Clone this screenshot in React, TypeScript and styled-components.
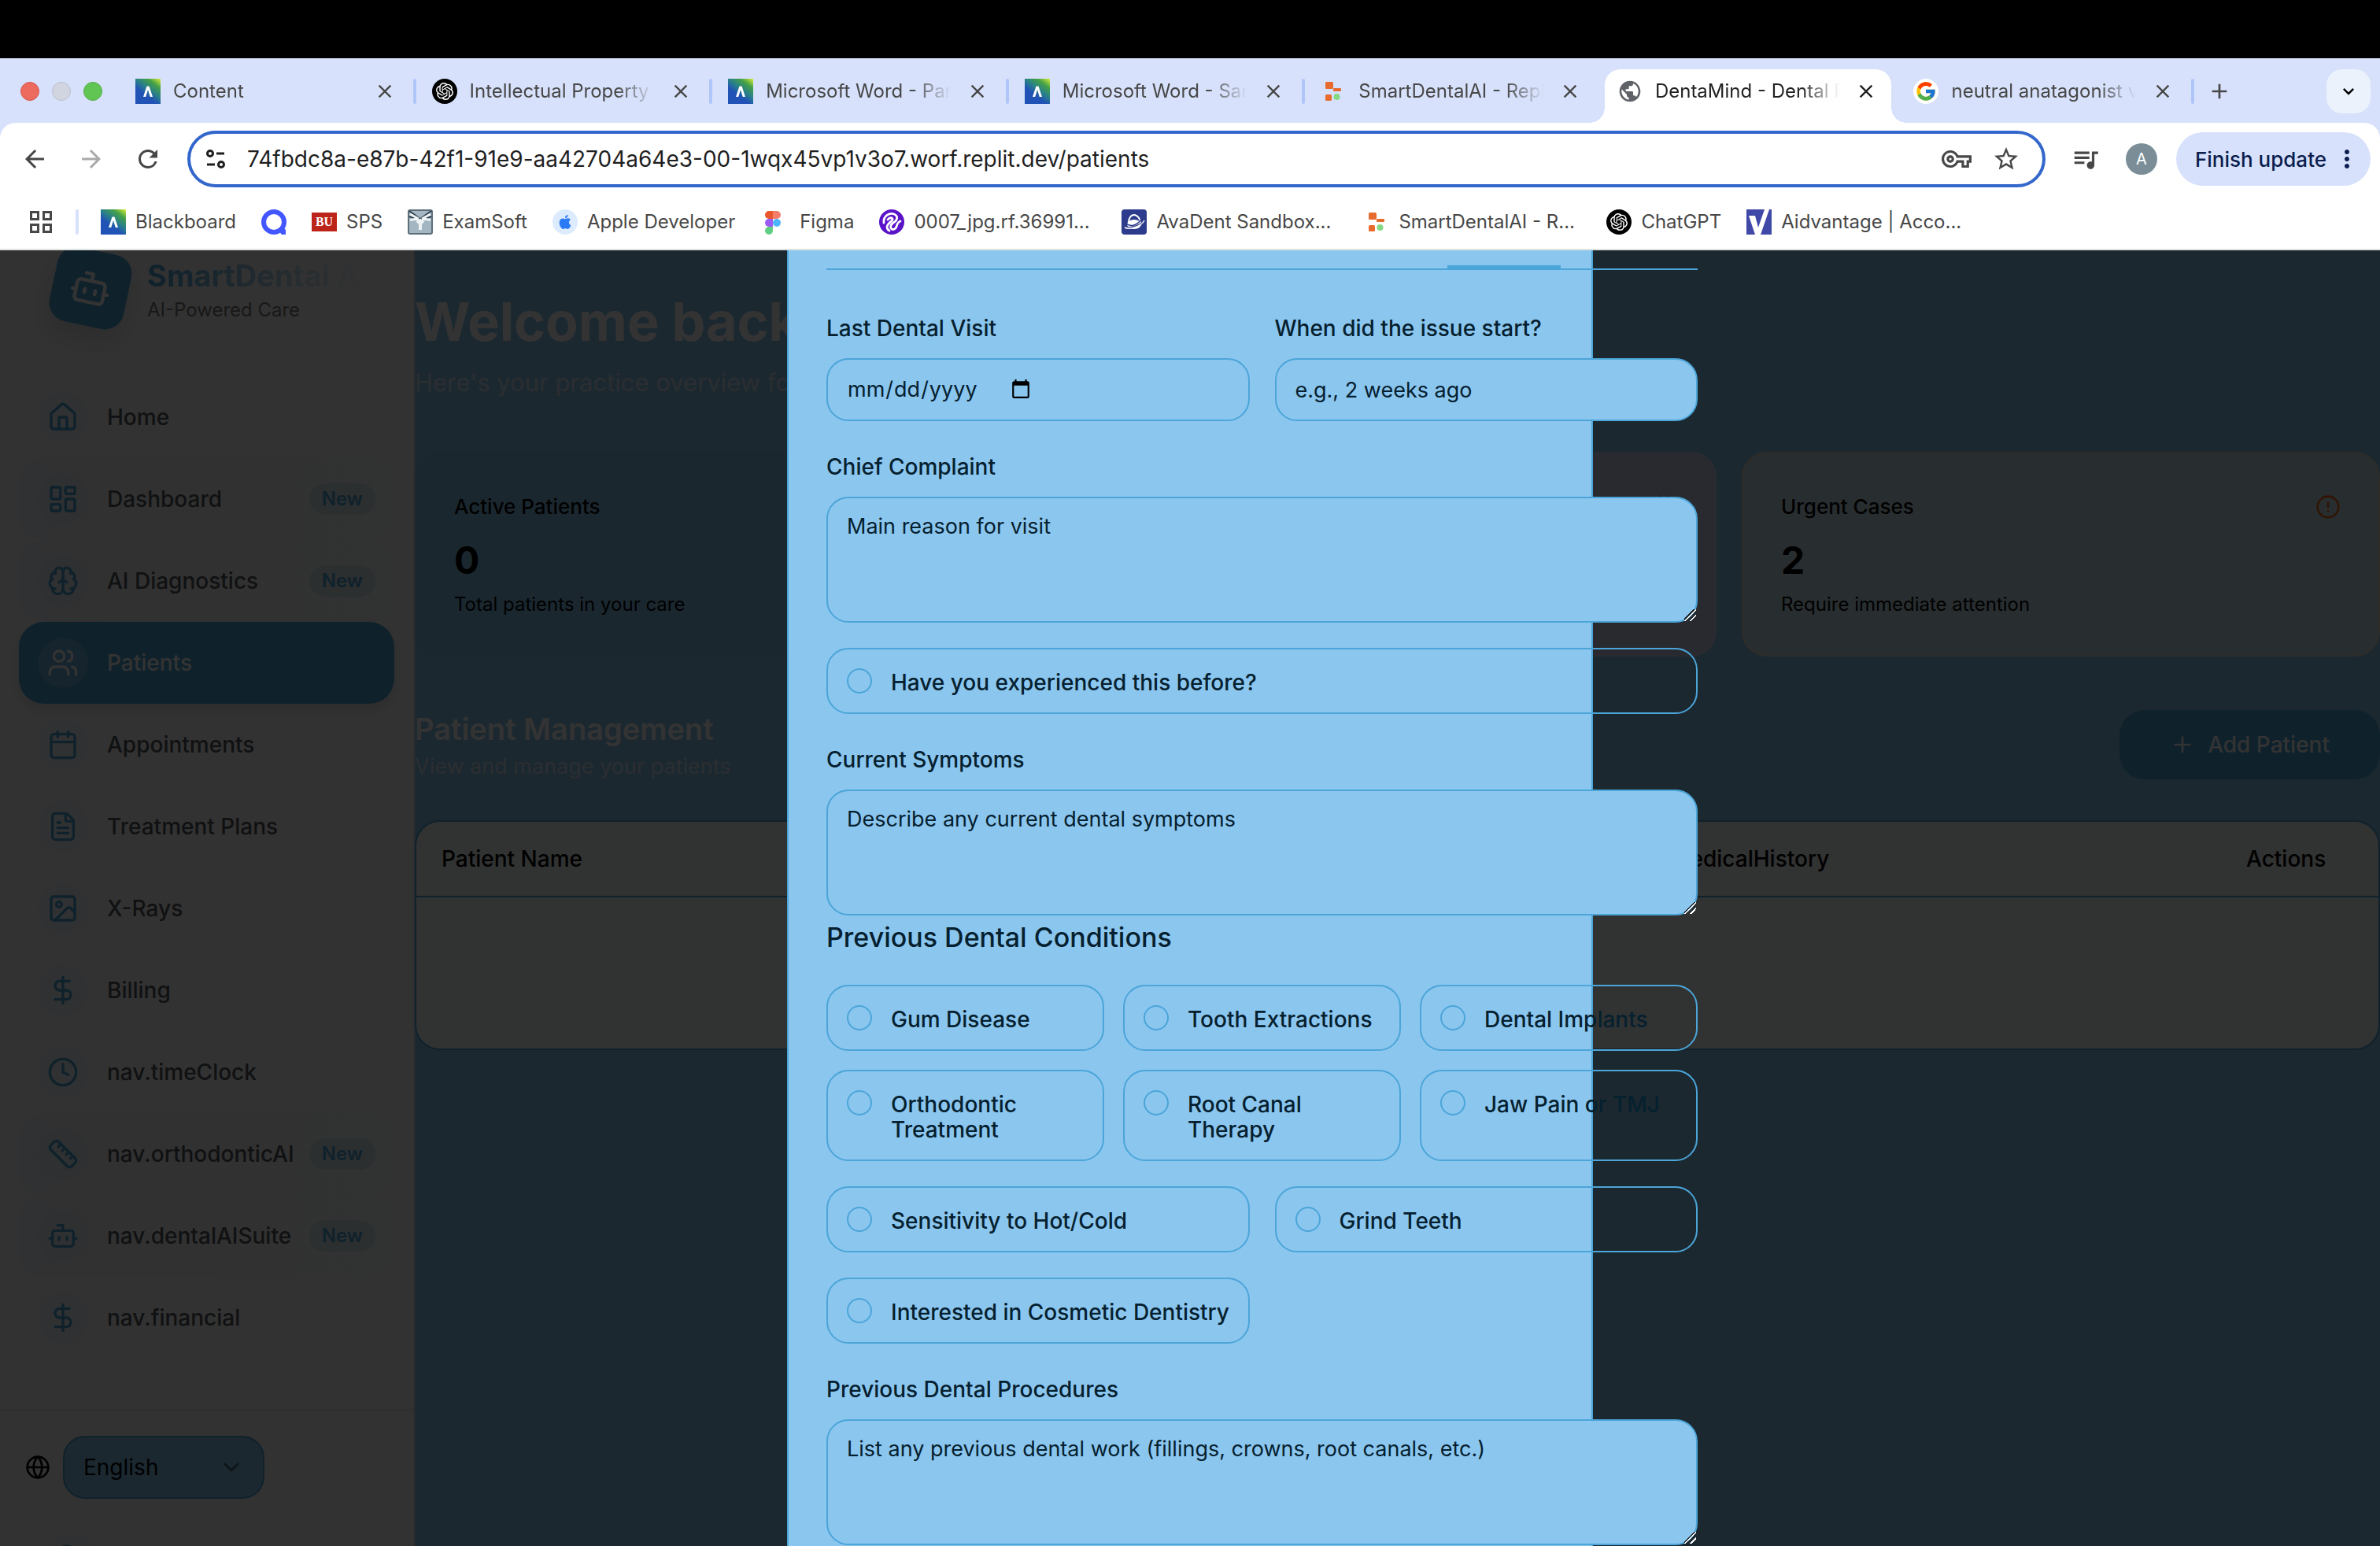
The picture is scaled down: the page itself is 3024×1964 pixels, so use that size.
import React from 'react';
import styled, { createGlobalStyle, css } from 'styled-components';
import {
  Bot, Brain, Calendar, ChevronDown, CircleAlert, Clock, DollarSign, FileText, Globe,
  House, Image as ImageIcon, LayoutDashboard, LogOut, Plus, Ruler, Users,
} from 'lucide-react';
import {
  MdArrowBack, MdArrowForward, MdClose, MdKeyboardArrowDown, MdOutlineVpnKey, MdPublic,
  MdQueueMusic, MdRefresh, MdStarBorder, MdMoreVert, MdAdd,
} from 'react-icons/md';
import { FcGoogle } from 'react-icons/fc';
import { SiOpenai, SiApple } from 'react-icons/si';

const color = {
  strip: '#d7e1fb',
  chromeText: '#474747',
  ink: '#1f1f1f',
  sky: '#8bc6ef',
  primary: '#4ba5d8',
  deep: '#05202e',
};

const GlobalStyle = createGlobalStyle`
  *, *::before, *::after { box-sizing: border-box; }
  html, body { margin: 0; height: 100%; }
  body { background: #000; overflow: hidden; font-family: Inter, 'Liberation Sans', sans-serif; }
  #root { height: 100%; }
  button, input, textarea, select { font: inherit; color: inherit; margin: 0; }
  h1, h2, h3, p { margin: 0; }
  a { color: inherit; text-decoration: none; }
`;

/* ---------- Browser frame ---------- */

const Screen = styled.div`
  display: flex;
  flex-direction: column;
  height: 100vh;
  padding-top: 74px;
`;

const TabStrip = styled.header`
  display: flex;
  align-items: flex-start;
  flex: none;
  height: 82px;
  padding: 14px 12px 0 26px;
  background: ${color.strip};
`;

const WindowButtons = styled.div`
  display: flex;
  align-items: center;
  gap: 16px;
  flex: none;
  width: 126px;
  height: 56px;
`;

const WindowButton = styled.button<{ $fill: string; $edge: string }>`
  width: 24px;
  height: 24px;
  padding: 0;
  border: 1px solid ${p => p.$edge};
  border-radius: 50%;
  background: ${p => p.$fill};
`;

const Tabs = styled.div`
  display: flex;
  flex: 0 1 2636px;
  min-width: 0;
`;

const TabCell = styled.div`
  display: flex;
  flex: 1;
  min-width: 0;
`;

const TabBody = styled.div<{ $active?: boolean }>`
  position: relative;
  display: flex;
  align-items: center;
  gap: 16px;
  flex: 1;
  min-width: 0;
  height: 68px;
  margin: 0 4px;
  padding: 0 18px 12px 16px;
  border-radius: 20px 20px 0 0;
  color: ${p => (p.$active ? color.ink : color.chromeText)};
  ${p => p.$active && css`
    background: #fff;
    &::before, &::after {
      content: '';
      position: absolute;
      bottom: 0;
      width: 20px;
      height: 20px;
    }
    &::before { right: 100%; background: radial-gradient(circle at 0 0, transparent 20px, #fff 20px); }
    &::after { left: 100%; background: radial-gradient(circle at 100% 0, transparent 20px, #fff 20px); }
  `}
`;

const TabTitle = styled.span`
  flex: 1;
  overflow: hidden;
  margin-right: 4px;
  font-size: 24px;
  line-height: 32px;
  white-space: nowrap;
  mask-image: linear-gradient(to right, #000 calc(100% - 48px), transparent);
`;

const TabDivider = styled.span<{ $hidden?: boolean }>`
  flex: none;
  width: 4px;
  height: 32px;
  margin-top: 12px;
  border-radius: 2px;
  background: ${p => (p.$hidden ? 'transparent' : '#aec6f8')};
`;

const PlainButton = styled.button`
  display: flex;
  flex: none;
  padding: 0;
  border: 0;
  background: none;
`;

const NewTab = styled(PlainButton)`
  align-items: center;
  height: 56px;
  margin: 0 auto 0 16px;
  color: ${color.chromeText};
`;

const TabSearch = styled(PlainButton)`
  align-items: center;
  justify-content: center;
  width: 56px;
  height: 56px;
  border-radius: 20px;
  background: #ebf2fc;
`;

const ToolbarBack = styled.div`
  flex: none;
  background: ${color.strip};
`;

const Toolbar = styled.div`
  display: flex;
  align-items: center;
  height: 92px;
  padding: 0 12px 0 26px;
  border-radius: 20px 20px 0 0;
  background: #fff;
  color: ${color.chromeText};
`;

const NavButtons = styled.div`
  display: flex;
  gap: 36px;
  margin-right: 32px;
`;

const NavButton = styled(PlainButton)`
  color: ${color.chromeText};
  &:disabled { color: #aaa; }
`;

const AddressBar = styled.label`
  display: flex;
  align-items: center;
  gap: 26px;
  flex: 1;
  height: 72px;
  padding: 0 28px 0 18px;
  border: 4px solid #3367cc;
  border-radius: 36px;
`;

const AddressInput = styled.input`
  flex: 1;
  min-width: 0;
  padding: 0;
  border: 0;
  outline: 0;
  background: none;
  color: ${color.ink};
  font-size: 28px;
  line-height: 40px;
`;

const ToolbarEnd = styled.div`
  display: flex;
  align-items: center;
  gap: 24px;
  margin-left: 32px;
`;

const Avatar = styled.button`
  width: 40px;
  height: 40px;
  margin-left: 8px;
  padding: 0;
  border: 0;
  border-radius: 50%;
  background: #7b8e98;
  color: #fff;
  font-size: 20px;
`;

const UpdateButton = styled.button`
  display: flex;
  align-items: center;
  gap: 8px;
  height: 68px;
  padding: 0 12px 0 24px;
  border: 0;
  border-radius: 34px;
  background: ${color.strip};
  color: #0a1d4d;
  font-size: 26px;
  font-weight: 500;
`;

const Bookmarks = styled.nav`
  display: flex;
  align-items: center;
  flex: none;
  height: 70px;
  padding: 0 38px;
  border-bottom: 2px solid #dfe3e0;
  background: #fff;
  color: ${color.chromeText};
`;

const BookmarkDivider = styled.span`
  width: 4px;
  height: 32px;
  margin: 0 28px 0 30px;
  border-radius: 2px;
  background: ${color.strip};
`;

const Bookmark = styled.a`
  display: flex;
  align-items: center;
  gap: 12px;
  margin-right: 32px;
  font-size: 24px;
  line-height: 32px;
  white-space: nowrap;
`;

const BookmarkLabel = styled.span<{ $long: boolean }>`
  min-width: ${p => (p.$long ? '232px' : '0')};
`;

const RoundIcon = styled.span<{ $bg: string; $fg: string }>`
  display: flex;
  align-items: center;
  justify-content: center;
  flex: none;
  width: 32px;
  height: 32px;
  border-radius: 50%;
  background: ${p => p.$bg};
  color: ${p => p.$fg};
`;

const BuBadge = styled.span`
  width: 32px;
  height: 24px;
  background: #bc2419;
  color: #fff;
  font: bold 16px/24px 'Liberation Serif', serif;
  text-align: center;
`;

/* ---------- Page behind the dialog ---------- */

const Page = styled.div`
  position: relative;
  display: flex;
  flex: 1;
  min-height: 0;
  overflow: hidden;
  background: ${color.sky};
`;

const Sidebar = styled.aside`
  display: flex;
  flex-direction: column;
  flex: none;
  width: 527px;
  border-right: 2px solid #e4e6e8;
  background: #fafafa;
`;

const Brand = styled.div`
  display: flex;
  gap: 24px;
  height: 96px;
  margin-bottom: 64px;
  padding-left: 67px;
`;

const BrandMark = styled.div`
  display: flex;
  align-items: center;
  justify-content: center;
  flex: none;
  width: 96px;
  height: 96px;
  border-radius: 24px;
  background: ${color.primary};
  color: #fff;
  transform: rotate(12deg);
  box-shadow: 0 16px 32px rgba(0, 0, 0, 0.12);
`;

const BrandText = styled.div`
  padding-top: 8px;
`;

const BrandName = styled.div`
  font-size: 38px;
  font-weight: 700;
  line-height: 48px;
  background: linear-gradient(to right, ${color.primary}, #fafafa);
  background-clip: text;
  color: transparent;
  white-space: nowrap;
`;

const BrandTag = styled.p`
  color: #777;
  font-size: 24px;
  line-height: 40px;
`;

const Nav = styled.nav`
  padding: 0 24px;
`;

const NavItem = styled.a<{ $active?: boolean; $isNew?: boolean }>`
  display: flex;
  align-items: center;
  height: 104px;
  padding: 0 24px;
  border-radius: 32px;
  color: ${p => (p.$active ? '#fff' : '#50555c')};
  font-size: 28px;
  font-weight: 500;
  ${p => p.$isNew && css`background: linear-gradient(to right, #f1f4fa, #f4f6f2 50%, #f5f7fb);`}
  ${p => p.$active && css`
    background: ${color.primary};
    box-shadow: 0 8px 16px rgba(0, 0, 0, 0.12);
  `}
`;

const NavIcon = styled.span<{ $active?: boolean; $isNew?: boolean }>`
  display: flex;
  align-items: center;
  justify-content: center;
  flex: none;
  width: 64px;
  height: 64px;
  margin-right: 24px;
  border-radius: 50%;
  background: ${p => (p.$active ? '#6ab3de' : p.$isNew ? '#e4eff2' : '#f0f3f7')};
  color: ${p => (p.$active ? '#fff' : color.primary)};
`;

const NewBadge = styled.span`
  margin-left: auto;
  padding: 0 16px;
  border-radius: 20px;
  background: #d9e9f0;
  color: ${color.primary};
  font-size: 24px;
  font-weight: 600;
  line-height: 40px;
`;

const SidebarFooter = styled.div`
  margin-top: 64px;
  padding: 32px 32px 0;
  border-top: 2px solid #e6e8ea;
`;

const LanguageRow = styled.label`
  display: flex;
  align-items: center;
  gap: 16px;
  color: #000;
`;

const SelectWrap = styled.span`
  position: relative;
  display: flex;
  width: 256px;
`;

const LanguageSelect = styled.select`
  appearance: none;
  width: 100%;
  height: 80px;
  padding: 0 24px;
  border: 2px solid ${color.primary};
  border-radius: 28px;
  background: ${color.sky};
  font-size: 28px;
`;

const SelectArrow = styled(ChevronDown)`
  position: absolute;
  top: 24px;
  right: 26px;
  opacity: 0.5;
  pointer-events: none;
`;

const SignOut = styled.button`
  display: flex;
  align-items: center;
  justify-content: center;
  width: 56px;
  height: 56px;
  margin: 44px 0 0 32px;
  padding: 0;
  border: 0;
  border-radius: 50%;
  background: #f0f3f7;
  color: ${color.primary};
`;

const Main = styled.main`
  flex: 1;
  min-width: 0;
  padding-top: 50px;
`;

const Welcome = styled.h1`
  color: #fff;
  font-size: 68px;
  font-weight: 700;
  line-height: 80px;
`;

const Lead = styled.p`
  margin: 14px 0 64px;
  color: #d4e6f3;
  font-size: 31px;
  line-height: 48px;
`;

const Cards = styled.div`
  display: grid;
  grid-template-columns: repeat(3, 1fr);
  gap: 32px;
`;

const Card = styled.section<{ $bg: string; $edge: string }>`
  padding: 48px;
  border: 2px solid ${p => p.$edge};
  border-radius: 32px;
  background: ${p => p.$bg};
  color: #000;
`;

const CardHead = styled.div`
  display: flex;
  align-items: center;
  justify-content: space-between;
  height: 40px;
  margin-bottom: 16px;
`;

const CardTitle = styled.h3`
  font-size: 26px;
  font-weight: 500;
  line-height: 40px;
`;

const CardValue = styled.p`
  font-size: 48px;
  font-weight: 700;
  line-height: 64px;
`;

const CardNote = styled.p`
  margin-top: 8px;
  font-size: 24px;
  line-height: 32px;
`;

const SectionHead = styled.div`
  display: flex;
  align-items: center;
  justify-content: space-between;
  margin: 64px 0 48px;
`;

const SectionTitle = styled.h2`
  color: #fff;
  font-size: 38px;
  font-weight: 600;
  line-height: 56px;
`;

const SectionNote = styled.p`
  color: #d4e6f3;
  font-size: 27px;
  line-height: 40px;
`;

const AddButton = styled.button`
  display: flex;
  align-items: center;
  gap: 16px;
  height: 88px;
  padding: 0 64px;
  border: 0;
  border-radius: 32px;
  background: ${color.primary};
  color: #fff;
  font-size: 28px;
  font-weight: 500;
`;

const TableFrame = styled.div`
  overflow: hidden;
  border: 2px solid ${color.primary};
  border-radius: 32px;
  background: #f6f7f9;
`;

const Table = styled.table`
  width: 100%;
  border-collapse: separate;
  border-spacing: 0;
  table-layout: fixed;
  color: #000;
  font-size: 28px;
`;

const HeadCell = styled.th<{ $width?: string }>`
  width: ${p => p.$width ?? 'auto'};
  height: 96px;
  padding: 0 32px;
  border-bottom: 2px solid ${color.primary};
  font-weight: 500;
  text-align: left;
`;

const EmptyCell = styled.td`
  height: 192px;
  text-align: center;
`;

/* ---------- Dialog ---------- */

const Overlay = styled.div`
  position: absolute;
  inset: 0;
  display: flex;
  justify-content: center;
  overflow: hidden;
  background: rgba(0, 0, 0, 0.8);
`;

const Dialog = styled.section`
  width: 1024px;
  padding: 0 48px;
  border: solid ${color.primary};
  border-width: 0 2px;
  background: ${color.sky};
  color: ${color.deep};
`;

const Form = styled.form`
  display: flex;
  flex-direction: column;
  gap: 32px;
  min-width: 1107px;
`;

const StepTabs = styled.div`
  display: flex;
  justify-content: flex-end;
  height: 25px;
  margin-bottom: 16px;
  padding-right: 174px;
  border-bottom: 2px solid ${color.primary};
`;

const StepMarker = styled.span`
  align-self: flex-end;
  width: 144px;
  height: 4px;
  background: ${color.primary};
`;

const Pair = styled.div`
  display: grid;
  grid-template-columns: 1fr 1fr;
  gap: 32px;
`;

const Triple = styled.div`
  display: grid;
  grid-template-columns: repeat(3, 1fr);
  gap: 24px;
`;

const Field = styled.label`
  display: flex;
  flex-direction: column;
  gap: 12px;
  font-size: 28px;
  font-weight: 500;
  line-height: 52px;
`;

const control = css`
  width: 100%;
  border: 2px solid ${color.primary};
  border-radius: 28px;
  outline: 0;
  background: ${color.sky};
  color: ${color.deep};
  font-size: 27px;
  font-weight: 400;
  line-height: 40px;
  &::placeholder { color: ${color.deep}; opacity: 1; }
`;

const TextInput = styled.input`
  ${control}
  height: 80px;
  padding: 0 24px;
`;

const DateInput = styled(TextInput)`
  &::-webkit-datetime-edit { flex: none; }
  &::-webkit-calendar-picker-indicator { width: 28px; height: 28px; margin-left: 4px; padding: 0; }
`;

const TextArea = styled.textarea`
  ${control}
  display: block;
  height: 160px;
  padding: 16px 24px;
  resize: vertical;
  &::-webkit-resizer {
    background: linear-gradient(
      135deg,
      transparent 40%, #1c2a33 40% 47%, #fff 47% 56%, transparent 56% 66%,
      #1c2a33 66% 73%, #fff 73% 80%, transparent 80%
    );
  }
`;

const SymptomGroup = styled.div`
  display: flex;
  flex-direction: column;
`;

const GroupTitle = styled.h3`
  font-size: 34px;
  font-weight: 500;
  line-height: 56px;
`;

const Option = styled.label`
  display: flex;
  align-items: flex-start;
  gap: 24px;
  padding: 24px 16px 22px 24px;
  border: 2px solid ${color.primary};
  border-radius: 28px;
  font-size: 28px;
  font-weight: 500;
  line-height: 32px;
`;

const OptionText = styled.span`
  padding-top: 2px;
`;

const Tick = styled.input`
  appearance: none;
  flex: none;
  width: 32px;
  height: 32px;
  border: 2px solid ${color.primary};
  border-radius: 50%;
  &:checked { background: ${color.primary}; }
`;

/* ---------- Small drawings ---------- */

const BlackboardLogo = ({ id }: { id: string }) => (
  <svg width="32" height="32" viewBox="0 0 32 32" aria-hidden="true">
    <defs>
      <linearGradient id={id} x1="0.25" y1="1" x2="1" y2="0">
        <stop offset="0.3" stopColor="#2152b5" />
        <stop offset="0.5" stopColor="#287f8c" />
        <stop offset="0.75" stopColor="#43a047" />
        <stop offset="1" stopColor="#d9ee3b" />
      </linearGradient>
    </defs>
    <rect width="32" height="32" fill={`url(#${id})`} />
    <path d="M10 23 14.5 9.500h3L22 23h-3.200L16 14l-2.800 9z" fill="#fff" />
  </svg>
);

const ReplitLogo = () => (
  <svg width="32" height="32" viewBox="0 0 32 32" aria-hidden="true">
    <rect x="6" y="4" width="10" height="9" rx="1.500" fill="#e66b2d" />
    <rect x="16" y="12" width="10" height="4" rx="1" fill="#e66b2d" />
    <rect x="6" y="20" width="8" height="8" rx="1.500" fill="#e66b2d" />
    <circle cx="20.500" cy="23" r="4" fill="#86d984" />
  </svg>
);

const QLogo = () => (
  <svg width="32" height="32" viewBox="0 0 32 32" aria-hidden="true">
    <circle cx="16" cy="16" r="13" fill="none" stroke="#4257ff" strokeWidth="6" />
    <path d="M21 26h7v-3l3 3v6h-5z" fill="#4257ff" />
  </svg>
);

const ExamSoftLogo = () => (
  <svg width="32" height="32" viewBox="0 0 32 32" aria-hidden="true">
    <rect x="1" y="1" width="30" height="30" rx="2" fill="#a3b6c1" stroke="#5d6f7b" strokeWidth="2" />
    <path d="M2 2 16 12 30 2M2 9l14 5 14-5" fill="none" stroke="#2f3e4c" strokeWidth="2" />
    <path d="M3 6l11 6M29 6l-11 6M3 14c4-2 8-2 11 0M29 14c-4-2-8-2-11 0" fill="none" stroke="#eef3f5" strokeWidth="3" />
    <path d="M16 13v13M12 17l4-3 4 3" fill="none" stroke="#eef3f5" strokeWidth="4" />
  </svg>
);

const FigmaLogo = () => (
  <svg width="38" height="32" viewBox="0 0 38 32" aria-hidden="true">
    <path d="M16 2h-5a5 5 0 0 0 0 10h5z" fill="#e8582c" />
    <path d="M16 2h5a5 5 0 0 1 0 10h-5z" fill="#f47e6c" />
    <path d="M16 12h-5a5 5 0 0 0 0 10h5z" fill="#9a5cf5" />
    <circle cx="21" cy="17" r="5" fill="#4db5fb" />
    <path d="M16 22h-5a5 5 0 1 0 5 5z" fill="#5fcf86" />
  </svg>
);

const SquiggleLogo = () => (
  <svg width="32" height="32" viewBox="0 0 32 32" fill="none" stroke="#fff" strokeWidth="2.800" strokeLinecap="round" aria-hidden="true">
    <circle cx="16" cy="16" r="16" fill="#5a13c8" stroke="none" />
    <path d="M6 17C5 8 13 4 19 6c6 3 4 8-1 11-3 2-4 4-3 7 2 3 6 1 7-2 1-4 2-6 5-7" />
    <path d="M11 13c2-3 6-3 6 0 0 2-6 4-7 9 0 2 1 4 3 5" />
  </svg>
);

const AvaDentLogo = () => (
  <svg width="32" height="32" viewBox="0 0 32 32" aria-hidden="true">
    <rect width="32" height="32" rx="4" fill="#2c3b8c" />
    <path d="M9 17c0-6 3-10 7-10s8 5 8 10" fill="none" stroke="#fff" strokeWidth="2" />
    <ellipse cx="16" cy="19" rx="9" ry="6" fill="#fff" />
    <path d="M4 22c4 3 20-1 24-8M5 17c6 6 14 4 20-4" fill="none" stroke="#2c3b8c" strokeWidth="1.500" />
    <path d="M4 23c5 3 20 0 25-9" fill="none" stroke="#fff" strokeWidth="1.500" />
  </svg>
);

const AidvantageLogo = () => (
  <svg width="32" height="32" viewBox="0 0 32 32" aria-hidden="true">
    <rect width="32" height="32" fill="#4149a8" />
    <path d="M3 8h8l4 15L23 0h6L18 32h-7z" fill="#fff" />
  </svg>
);

const SiteControls = () => (
  <svg width="28" height="28" viewBox="0 0 28 28" fill="none" stroke="#1f1f1f" strokeWidth="3" aria-hidden="true">
    <circle cx="7" cy="7" r="3.500" />
    <path d="M15 7h10M3 21h10" />
    <circle cx="21" cy="21" r="3.500" />
  </svg>
);

const AppsGrid = () => (
  <svg width="28" height="28" viewBox="0 0 28 28" fill="none" stroke="#474747" strokeWidth="3" aria-hidden="true">
    <path d="M1.500 1.500h9v9h-9zM17.500 1.500h9v9h-9zM1.500 17.500h9v9h-9zM17.500 17.500h9v9h-9z" />
  </svg>
);

const OpenAiLogo = () => <RoundIcon $bg="#000" $fg="#fff"><SiOpenai size={22} /></RoundIcon>;

/* ---------- Content ---------- */

const tabs = [
  { title: 'Content', icon: <BlackboardLogo id="bb-content" /> },
  { title: 'Intellectual Property', icon: <OpenAiLogo /> },
  { title: 'Microsoft Word - Par', icon: <BlackboardLogo id="bb-paper" /> },
  { title: 'Microsoft Word - Sar', icon: <BlackboardLogo id="bb-sample" /> },
  { title: 'SmartDentalAI - Repl', icon: <ReplitLogo />, noDivider: true },
  { title: 'DentaMind - Dental P', icon: <RoundIcon $bg="transparent" $fg="#5f6368"><MdPublic size={34} /></RoundIcon>, active: true, noDivider: true },
  { title: 'neutral anatagonist v', icon: <RoundIcon $bg="#fff" $fg="#000"><FcGoogle size={28} /></RoundIcon> },
];

const bookmarks = [
  { label: 'Blackboard', icon: <BlackboardLogo id="bb-mark" /> },
  { label: '', icon: <QLogo /> },
  { label: 'SPS', icon: <BuBadge>BU</BuBadge> },
  { label: 'ExamSoft', icon: <ExamSoftLogo /> },
  { label: 'Apple Developer', icon: <RoundIcon $bg="#dcebfd" $fg="#2b7bf6"><SiApple size={18} /></RoundIcon> },
  { label: 'Figma', icon: <FigmaLogo /> },
  { label: '0007_jpg.rf.36991...', icon: <SquiggleLogo /> },
  { label: 'AvaDent Sandbox...', icon: <AvaDentLogo /> },
  { label: 'SmartDentalAI - R...', icon: <ReplitLogo /> },
  { label: 'ChatGPT', icon: <OpenAiLogo /> },
  { label: 'Aidvantage | Acco...', icon: <AidvantageLogo /> },
];

const navItems = [
  { label: 'Home', Icon: House },
  { label: 'Dashboard', Icon: LayoutDashboard, isNew: true },
  { label: 'AI Diagnostics', Icon: Brain, isNew: true },
  { label: 'Patients', Icon: Users, active: true },
  { label: 'Appointments', Icon: Calendar },
  { label: 'Treatment Plans', Icon: FileText },
  { label: 'X-Rays', Icon: ImageIcon },
  { label: 'Billing', Icon: DollarSign },
  { label: 'nav.timeClock', Icon: Clock },
  { label: 'nav.orthodonticAI', Icon: Ruler, isNew: true },
  { label: 'nav.dentalAISuite', Icon: Bot, isNew: true },
  { label: 'nav.financial', Icon: DollarSign },
];

const conditions = [
  'Gum Disease', 'Tooth Extractions', 'Dental Implants',
  'Orthodontic Treatment', 'Root Canal Therapy', 'Jaw Pain or TMJ',
];

const CheckOption = ({ label }: { label: string }) => (
  <Option>
    <Tick type="checkbox" />
    <OptionText>{label}</OptionText>
  </Option>
);

const BrowserChrome = () => (
  <>
    <TabStrip>
      <WindowButtons>
        <WindowButton aria-label="Close window" $fill="#ed6a5e" $edge="#d5564b" />
        <WindowButton aria-label="Minimize window" $fill="#d0d5e0" $edge="#b9bfcc" />
        <WindowButton aria-label="Zoom window" $fill="#61c554" $edge="#51ab46" />
      </WindowButtons>
      <Tabs>
        {tabs.map(tab => (
          <TabCell key={tab.title}>
            <TabBody $active={tab.active}>
              {tab.icon}
              <TabTitle>{tab.title}</TabTitle>
              <PlainButton aria-label="Close tab"><MdClose size={28} /></PlainButton>
            </TabBody>
            <TabDivider $hidden={tab.noDivider} />
          </TabCell>
        ))}
      </Tabs>
      <NewTab aria-label="New tab"><MdAdd size={32} /></NewTab>
      <TabSearch aria-label="Search tabs"><MdKeyboardArrowDown size={28} /></TabSearch>
    </TabStrip>
    <ToolbarBack>
      <Toolbar>
        <NavButtons>
          <NavButton aria-label="Back"><MdArrowBack size={36} /></NavButton>
          <NavButton aria-label="Forward" disabled><MdArrowForward size={36} /></NavButton>
          <NavButton aria-label="Reload"><MdRefresh size={36} /></NavButton>
        </NavButtons>
        <AddressBar>
          <SiteControls />
          <AddressInput
            aria-label="Address"
            defaultValue="74fbdc8a-e87b-42f1-91e9-aa42704a64e3-00-1wqx45vp1v3o7.worf.replit.dev/patients"
          />
          <MdOutlineVpnKey size={38} />
          <MdStarBorder size={36} />
        </AddressBar>
        <ToolbarEnd>
          <PlainButton aria-label="Media queue"><MdQueueMusic size={38} /></PlainButton>
          <Avatar>A</Avatar>
          <UpdateButton>Finish update<MdMoreVert size={36} /></UpdateButton>
        </ToolbarEnd>
      </Toolbar>
    </ToolbarBack>
    <Bookmarks>
      <AppsGrid />
      <BookmarkDivider />
      {bookmarks.map((mark, i) => (
        <Bookmark key={i} href="#" aria-label={mark.label || 'Bookmark'}>
          {mark.icon}
          {mark.label && <BookmarkLabel $long={mark.label.endsWith('...')}>{mark.label}</BookmarkLabel>}
        </Bookmark>
      ))}
    </Bookmarks>
  </>
);

const AppSidebar = () => (
  <Sidebar>
    <Brand>
      <BrandMark><Bot size={54} /></BrandMark>
      <BrandText>
        <BrandName>SmartDental AI</BrandName>
        <BrandTag>AI-Powered Care</BrandTag>
      </BrandText>
    </Brand>
    <Nav>
      {navItems.map(({ label, Icon, isNew, active }) => (
        <NavItem key={label} href="#" $active={active} $isNew={isNew}>
          <NavIcon $active={active} $isNew={isNew}><Icon size={40} /></NavIcon>
          {label}
          {isNew && <NewBadge>New</NewBadge>}
        </NavItem>
      ))}
    </Nav>
    <SidebarFooter>
      <LanguageRow>
        <Globe size={32} />
        <SelectWrap>
          <LanguageSelect aria-label="Language"><option>English</option></LanguageSelect>
          <SelectArrow size={32} />
        </SelectWrap>
      </LanguageRow>
      <SignOut aria-label="Sign out"><LogOut size={32} /></SignOut>
    </SidebarFooter>
  </Sidebar>
);

const PatientsPage = () => (
  <Main>
    <Welcome>Welcome back</Welcome>
    <Lead>Here's your practice overview for</Lead>
    <Cards>
      <Card $bg="#88c1e9" $edge="#86bfe8">
        <CardHead><CardTitle>Active Patients</CardTitle></CardHead>
        <CardValue>0</CardValue>
        <CardNote>Total patients in your care</CardNote>
      </Card>
      <Card $bg="#c8d2f0" $edge="#d2d6f0">
        <CardHead><span /><Calendar size={32} color="#8b6fd8" /></CardHead>
      </Card>
      <Card $bg="#c8e0ea" $edge="#e0dccb">
        <CardHead>
          <CardTitle>Urgent Cases</CardTitle>
          <CircleAlert size={32} color="#ee6b16" />
        </CardHead>
        <CardValue>2</CardValue>
        <CardNote>Require immediate attention</CardNote>
      </Card>
    </Cards>
    <SectionHead>
      <div>
        <SectionTitle>Patient Management</SectionTitle>
        <SectionNote>View and manage your patients</SectionNote>
      </div>
      <AddButton><Plus size={32} />Add Patient</AddButton>
    </SectionHead>
    <TableFrame>
      <Table>
        <thead>
          <tr>
            <HeadCell>Patient Name</HeadCell>
            <HeadCell $width="732px">MedicalHistory</HeadCell>
            <HeadCell $width="200px">Actions</HeadCell>
          </tr>
        </thead>
        <tbody>
          <tr><EmptyCell colSpan={3} /></tr>
        </tbody>
      </Table>
    </TableFrame>
  </Main>
);

const IntakeDialog = () => (
  <Overlay>
    <Dialog role="dialog" aria-label="Dental history">
      <Form>
        <StepTabs><StepMarker /></StepTabs>
        <Pair>
          <Field>Last Dental Visit<DateInput type="date" /></Field>
          <Field>When did the issue start?<TextInput placeholder="e.g., 2 weeks ago" /></Field>
        </Pair>
        <Field>Chief Complaint<TextArea placeholder="Main reason for visit" /></Field>
        <CheckOption label="Have you experienced this before?" />
        <SymptomGroup>
          <Field>Current Symptoms<TextArea placeholder="Describe any current dental symptoms" /></Field>
          <GroupTitle>Previous Dental Conditions</GroupTitle>
        </SymptomGroup>
        <Triple>
          {conditions.map(name => <CheckOption key={name} label={name} />)}
        </Triple>
        <Pair>
          <CheckOption label="Sensitivity to Hot/Cold" />
          <CheckOption label="Grind Teeth" />
          <CheckOption label="Interested in Cosmetic Dentistry" />
        </Pair>
        <Field>
          Previous Dental Procedures
          <TextArea placeholder="List any previous dental work (fillings, crowns, root canals, etc.)" />
        </Field>
      </Form>
    </Dialog>
  </Overlay>
);

const App = () => (
  <>
    <GlobalStyle />
    <Screen>
      <BrowserChrome />
      <Page>
        <AppSidebar />
        <PatientsPage />
        <IntakeDialog />
      </Page>
    </Screen>
  </>
);

export default App;
